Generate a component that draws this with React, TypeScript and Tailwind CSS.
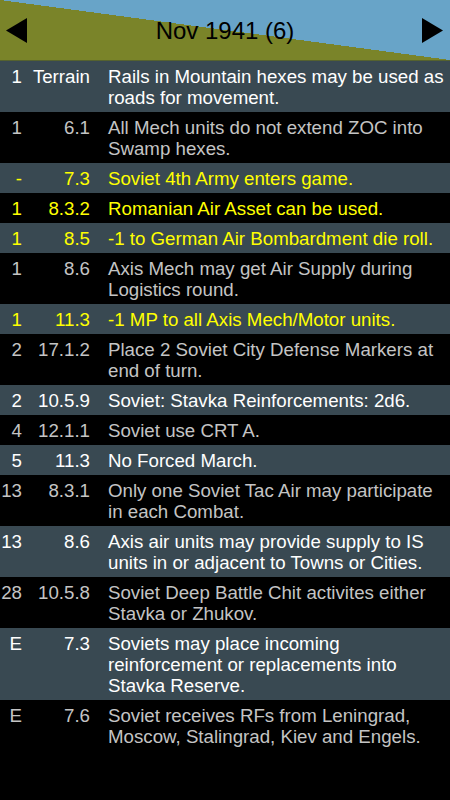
import React from 'react';

type Row = { turn: string; rule: string; text: string; hl?: boolean };

const rows: Row[] = [
  { turn: '1', rule: 'Terrain', text: 'Rails in Mountain hexes may be used as roads for movement.' },
  { turn: '1', rule: '6.1', text: 'All Mech units do not extend ZOC into Swamp hexes.' },
  { turn: '-', rule: '7.3', text: 'Soviet 4th Army enters game.', hl: true },
  { turn: '1', rule: '8.3.2', text: 'Romanian Air Asset can be used.', hl: true },
  { turn: '1', rule: '8.5', text: '-1 to German Air Bombardment die roll.', hl: true },
  { turn: '1', rule: '8.6', text: 'Axis Mech may get Air Supply during Logistics round.' },
  { turn: '1', rule: '11.3', text: '-1 MP to all Axis Mech/Motor units.', hl: true },
  { turn: '2', rule: '17.1.2', text: 'Place 2 Soviet City Defense Markers at end of turn.' },
  { turn: '2', rule: '10.5.9', text: 'Soviet: Stavka Reinforcements: 2d6.' },
  { turn: '4', rule: '12.1.1', text: 'Soviet use CRT A.' },
  { turn: '5', rule: '11.3', text: 'No Forced March.' },
  { turn: '13', rule: '8.3.1', text: 'Only one Soviet Tac Air may participate in each Combat.' },
  { turn: '13', rule: '8.6', text: 'Axis air units may provide supply to IS units in or adjacent to Towns or Cities.' },
  { turn: '28', rule: '10.5.8', text: 'Soviet Deep Battle Chit activites either Stavka or Zhukov.' },
  { turn: 'E', rule: '7.3', text: 'Soviets may place incoming reinforcement or replacements into Stavka Reserve.' },
  { turn: 'E', rule: '7.6', text: 'Soviet receives RFs from Leningrad, Moscow, Stalingrad, Kiev and Engels.' },
];

function Arrow({ dir }: { dir: 'left' | 'right' }) {
  return (
    <svg width="22" height="25" viewBox="0 0 22 25" className="block">
      {dir === 'left' ? (
        <polygon points="21,0 21,25 0,12.5" fill="#000" />
      ) : (
        <polygon points="0,0 0,25 21,12.5" fill="#000" />
      )}
    </svg>
  );
}

export default function App() {
  return (
    <div
      className="w-[450px] h-[800px] bg-black overflow-hidden"
      style={{ fontFamily: '"Liberation Sans", Arial, sans-serif' }}
    >
      <div className="h-[61px] border-b border-[#55622f] bg-[linear-gradient(to_top_right,#7a8429_50%,#68a4c8_50%)] flex items-center justify-between px-[6px]">
        <button className="pt-[1px]">
          <Arrow dir="left" />
        </button>
        <span className="text-[24px] text-black leading-none pt-[1px]">Nov 1941 (6)</span>
        <button className="pt-[1px]">
          <Arrow dir="right" />
        </button>
      </div>
      {rows.map((r, i) => {
        const gray = i % 2 === 0;
        const color = r.hl ? 'text-[#ffff00]' : gray ? 'text-white' : 'text-[#c4c4c4]';
        return (
          <div
            key={i}
            className={`flex text-[18.7px] leading-[21px] py-[4.5px] ${gray ? 'bg-[#394952]' : 'bg-black'} ${color}`}
          >
            <div className="w-[22px] shrink-0 text-right">{r.turn}</div>
            <div className="w-[68px] shrink-0 text-right">{r.rule}</div>
            <div className="flex-1 ml-[18px] pr-[2px]">{r.text}</div>
          </div>
        );
      })}
    </div>
  );
}
